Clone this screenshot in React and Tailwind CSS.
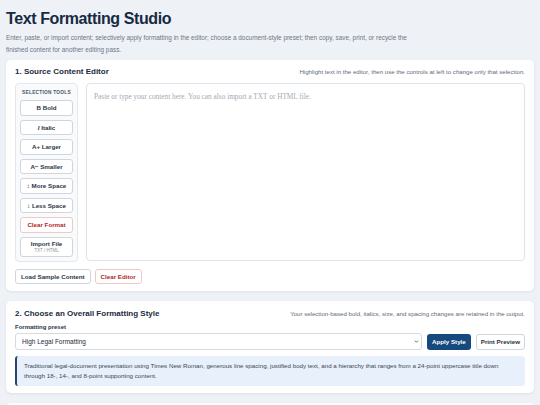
import { useState } from 'react';

const TOOLS = ['B Bold', 'I Italic', 'A+ Larger', 'A− Smaller', '↕ More Space', '↕ Less Space'];

const PRESETS = [
  'High Legal Formatting',
  'Business Memo',
  'Academic Paper',
  'Modern Report',
];

export default function App() {
  const [content, setContent] = useState('');
  const [preset, setPreset]   = useState(PRESETS[0]);

  return (
    <div className="min-h-screen bg-[#eef2f7] px-[6px] pt-[9px] text-[#1e2b3c] font-['Liberation_Sans',Arial,sans-serif]">
      <h1 className="text-[16px] font-bold leading-[20px] tracking-tight text-[#172a43]">Text Formatting Studio</h1>
      <p className="mt-[3px] max-w-[410px] text-[6.4px] leading-[11.5px] text-[#6b7686]">
        Enter, paste, or import content; selectively apply formatting in the editor; choose a document-style preset; then copy, save, print, or recycle the finished content for another editing pass.
      </p>

      {/* section 1 */}
      <section className="mt-[5px] rounded-[5px] bg-white px-[9px] pt-[6px] pb-[7px] shadow-[0_1px_3px_rgba(15,23,42,0.08)]">
        <div className="flex items-center justify-between">
          <h2 className="text-[8px] font-bold leading-[12px] text-[#1b2a3d]">1. Source Content Editor</h2>
          <span className="text-[6.1px] text-[#5f6b7a]">Highlight text in the editor, then use the controls at left to change only that selection.</span>
        </div>

        <div className="mt-[5px] flex gap-[8px]">
          <div className="flex w-[63px] shrink-0 flex-col gap-[4px] rounded-[4px] border border-[#e3e8ef] bg-[#f8fafc] px-[4px] pt-[5px] pb-[4px]">
            <div className="text-center text-[4.8px] font-bold leading-[7px] tracking-[0.05em] text-[#4a5566]">SELECTION TOOLS</div>
            {TOOLS.map((t) => (
              <button
                key={t}
                className="h-[15.5px] rounded-[3px] border border-[#cfd6df] bg-white text-[6.2px] font-bold text-[#2a3646]"
              >
                {t === 'I Italic' ? <span><i>I</i> Italic</span> : t}
              </button>
            ))}
            <button className="h-[15.5px] rounded-[3px] border border-[#efc9c5] bg-white text-[6.2px] font-bold text-[#b3261e]">Clear Format</button>
            <button className="flex h-[20.5px] flex-col items-center justify-center rounded-[3px] border border-[#cfd6df] bg-white text-[#2a3646]">
              <span className="text-[6.2px] font-bold leading-[7.5px]">Import File</span>
              <span className="text-[4.5px] leading-[5.5px] text-[#8a94a3]">TXT / HTML</span>
            </button>
          </div>

          <textarea
            value={content}
            onChange={(e) => setContent(e.target.value)}
            placeholder="Paste or type your content here. You can also import a TXT or HTML file."
            className="h-[178px] flex-1 resize-none rounded-[4px] border border-[#dde3ea] bg-white px-[7px] py-[8px] font-['Liberation_Serif','Times_New_Roman',serif] text-[7.3px] leading-[10px] text-[#1e2b3c] placeholder:text-[#a3aab4] focus:outline-none"
          />
        </div>

        <div className="mt-[7px] flex gap-[4px]">
          <button className="h-[15px] rounded-[3px] border border-[#cfd6df] bg-white px-[5px] text-[6.2px] font-bold text-[#2a3646]">Load Sample Content</button>
          <button className="h-[15px] rounded-[3px] border border-[#efc9c5] bg-white px-[5px] text-[6.2px] font-bold text-[#b3261e]">Clear Editor</button>
        </div>
      </section>

      {/* section 2 */}
      <section className="mt-[10px] rounded-[5px] bg-white px-[9px] pt-[7px] pb-[7px] shadow-[0_1px_3px_rgba(15,23,42,0.08)]">
        <div className="flex items-center justify-between">
          <h2 className="text-[8px] font-bold leading-[12px] text-[#1b2a3d]">2. Choose an Overall Formatting Style</h2>
          <span className="text-[6.1px] text-[#5f6b7a]">Your selection-based bold, italics, size, and spacing changes are retained in the output.</span>
        </div>

        <label className="mt-[3px] block text-[6px] font-bold leading-[9px] text-[#2a3646]">Formatting preset</label>
        <div className="mt-[1px] flex items-center gap-[5px]">
          <div className="relative flex-1">
            <select
              value={preset}
              onChange={(e) => setPreset(e.target.value)}
              className="block h-[17px] w-full appearance-none rounded-[3px] border border-[#d5dbe3] bg-white pl-[6px] text-[6.5px] text-[#1e2b3c] focus:outline-none"
            >
              {PRESETS.map((p) => <option key={p}>{p}</option>)}
            </select>
            <svg className="pointer-events-none absolute right-[3px] top-[6px] h-[5px] w-[5px] text-[#4a5566]" viewBox="0 0 10 10" fill="none" stroke="currentColor" strokeWidth="1.8">
              <path d="M2 3.5l3 3 3-3" />
            </svg>
          </div>
          <button className="h-[16px] rounded-[3px] bg-[#164a7e] px-[5px] text-[6.2px] font-bold text-white">Apply Style</button>
          <button className="h-[16px] rounded-[3px] border border-[#cfd6df] bg-white px-[4px] text-[6.2px] font-bold text-[#2a3646]">Print Preview</button>
        </div>

        <div className="mt-[6px] rounded-[3px] border-l-[2px] border-[#26466d] bg-[#e8f0fb] px-[7px] py-[5px] text-[6.2px] leading-[10px] text-[#3a4656]">
          Traditional legal-document presentation using Times New Roman, generous line spacing, justified body text, and a hierarchy that ranges from a 24-point uppercase title down through 18-, 14-, and 8-point supporting content.
        </div>
      </section>

      {/* section 3 (partly visible) */}
      <section className="mt-[10px] h-[60px] rounded-[5px] bg-white shadow-[0_1px_3px_rgba(15,23,42,0.08)]" />
    </div>
  );
}
